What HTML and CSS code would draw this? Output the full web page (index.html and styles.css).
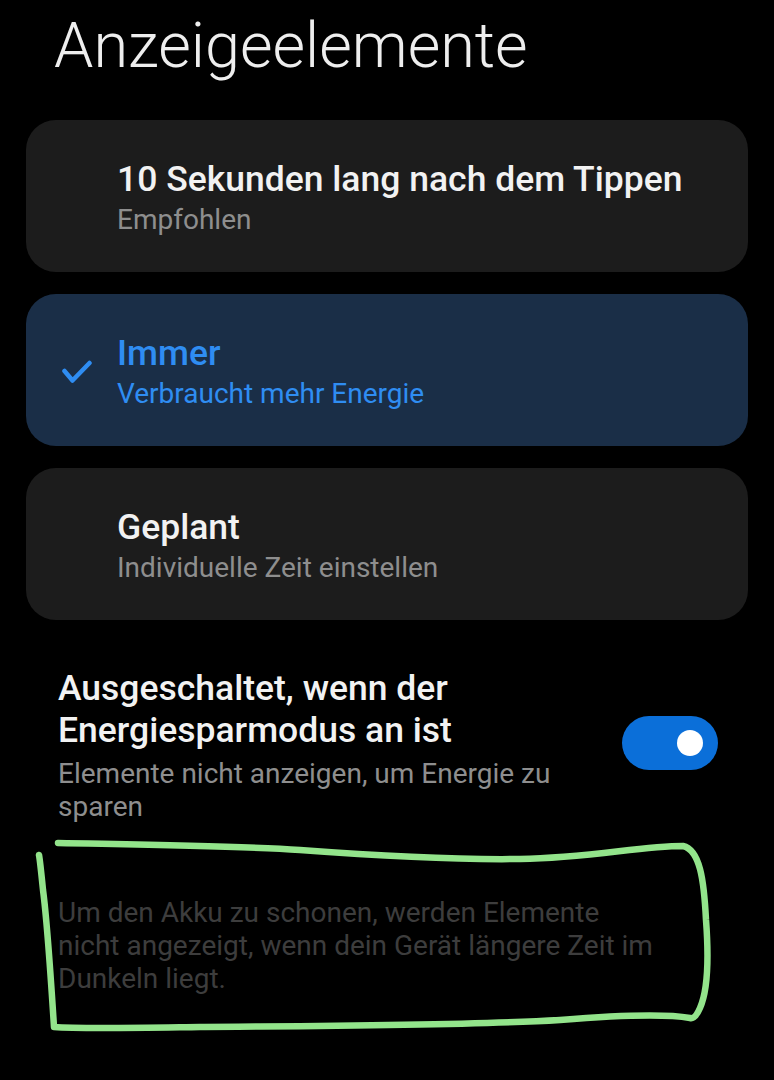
FILE: index.html
```html
<!DOCTYPE html>
<html>
<head>
    <title>Anzeigeelemente</title>
    <link rel="stylesheet" href="styles.css">
</head>
<body>
    <div class="screen">
        <h1 class="page-title">Anzeigeelemente</h1>

        <div class="options">
            <div class="option">
                <div class="check-slot"></div>
                <div class="option-text">
                    <div class="option-title">10 Sekunden lang nach dem Tippen</div>
                    <div class="option-sub">Empfohlen</div>
                </div>
            </div>
            <div class="option selected">
                <div class="check-slot">
                    <svg width="30" height="24" viewBox="0 0 30 24">
                        <polyline points="2.5,11 10.5,20.5 27.5,3" fill="none" stroke="#2f8df2" stroke-width="4.5" stroke-linecap="round" stroke-linejoin="round"/>
                    </svg>
                </div>
                <div class="option-text">
                    <div class="option-title">Immer</div>
                    <div class="option-sub">Verbraucht mehr Energie</div>
                </div>
            </div>
            <div class="option">
                <div class="check-slot"></div>
                <div class="option-text">
                    <div class="option-title">Geplant</div>
                    <div class="option-sub">Individuelle Zeit einstellen</div>
                </div>
            </div>
        </div>

        <div class="setting">
            <div class="setting-text">
                <div class="setting-title">Ausgeschaltet, wenn der Energiesparmodus an ist</div>
                <div class="setting-sub">Elemente nicht anzeigen, um Energie zu sparen</div>
            </div>
            <div class="switch"><span class="knob"></span></div>
        </div>

        <p class="note">Um den Akku zu schonen, werden Elemente nicht angezeigt, wenn dein Gerät längere Zeit im Dunkeln liegt.</p>

        <!-- hand drawn marker around the note -->
        <svg class="marker" viewBox="0 0 774 1080" width="774" height="1080">
            <path d="M58,843 C160,845 240,846 300,850 C380,856 450,860 520,859 C590,858 640,846 683,846
                     C700,850 704,880 706,920 C709,960 708,990 700,1008 C697,1015 694,1019 690,1018
                     C660,1013 610,1016 560,1020 C460,1026 300,1026 200,1027 C130,1028 80,1029 54,1027
                     C51,980 47,920 43,890 C41,870 40,860 39,855"
                  fill="none" stroke="#93e48b" stroke-width="6.5" stroke-linecap="round" stroke-linejoin="round"/>
        </svg>
    </div>
</body>
</html>
```

FILE: styles.css
```css
body {
    margin: 0;
    background-color: #000;
    font-family: Roboto, 'Noto Sans', sans-serif;
    color: #f0f0f0;
}

.screen {
    position: relative;
    width: 774px;
    height: 1080px;
    overflow: hidden;
}

.page-title {
    margin: 0;
    padding: 10px 0 0 54px;
    font-size: 63px;
    font-weight: 300;
    line-height: 72px;
    color: #eeeeee;
}

.options {
    display: flex;
    flex-direction: column;
    gap: 22px;
    margin-top: 38px;
    padding: 0 26px;
}

.option {
    display: flex;
    align-items: center;
    height: 152px;
    box-sizing: border-box;
    padding-left: 36px;
    background-color: #1c1c1c;
    border-radius: 30px;
}

.option.selected {
    background-color: #1a2e47;
}

.check-slot {
    width: 55px;
    height: 24px;
    flex-shrink: 0;
    padding-top: 4px;
}

.option-text {
    padding-top: 4px;
}

.option-title {
    font-size: 35.5px;
    font-weight: 500;
    line-height: 40px;
    color: #f2f2f2;
}

.option-sub {
    margin-top: 4px;
    font-size: 28px;
    line-height: 34px;
    color: #8e8e8e;
}

.selected .option-title,
.selected .option-sub {
    color: #2f8df2;
}

.setting {
    display: flex;
    align-items: center;
    justify-content: space-between;
    margin-top: 47px;
    padding: 0 56px 0 58px;
}

.setting-text {
    width: 540px;
}

.setting-title {
    font-size: 35.5px;
    font-weight: 500;
    line-height: 42px;
    color: #f2f2f2;
}

.setting-sub {
    margin-top: 6px;
    font-size: 28px;
    line-height: 33px;
    color: #8e8e8e;
}

.switch {
    display: flex;
    align-items: center;
    justify-content: flex-end;
    width: 96px;
    height: 54px;
    box-sizing: border-box;
    padding-right: 15px;
    margin-bottom: 4px;
    background-color: #0b6fd9;
    border-radius: 27px;
}

.knob {
    width: 26px;
    height: 26px;
    background-color: #fff;
    border-radius: 50%;
}

.note {
    width: 606px;
    margin: 73px 0 0;
    padding-left: 58px;
    font-size: 28px;
    line-height: 33px;
    color: #3d3d3d;
}

.marker {
    position: absolute;
    top: 0;
    left: 0;
    pointer-events: none;
}
```
